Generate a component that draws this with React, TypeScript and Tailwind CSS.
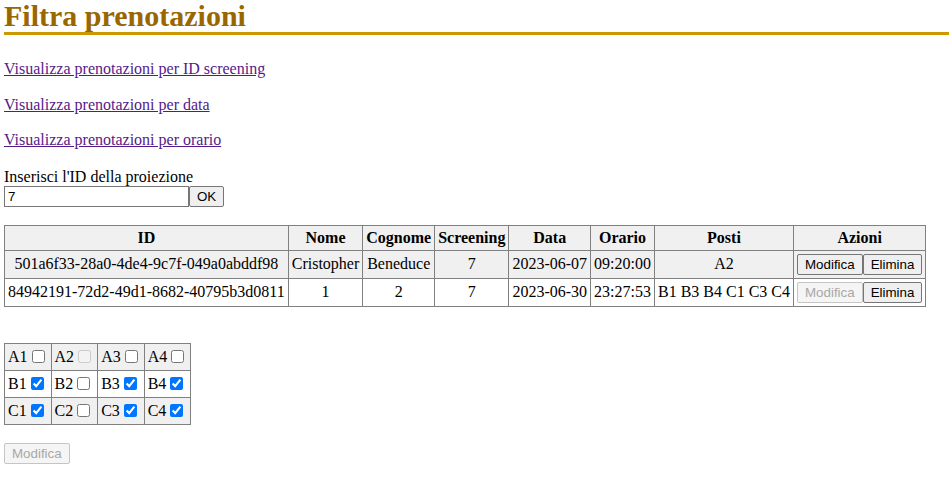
import { useState } from "react";

type Booking = {
  id: string;
  nome: string;
  cognome: string;
  screening: string;
  data: string;
  orario: string;
  posti: string;
  canEdit: boolean;
};

const bookings: Booking[] = [
  {
    id: "501a6f33-28a0-4de4-9c7f-049a0abddf98",
    nome: "Cristopher",
    cognome: "Beneduce",
    screening: "7",
    data: "2023-06-07",
    orario: "09:20:00",
    posti: "A2",
    canEdit: true,
  },
  {
    id: "84942191-72d2-49d1-8682-40795b3d0811",
    nome: "1",
    cognome: "2",
    screening: "7",
    data: "2023-06-30",
    orario: "23:27:53",
    posti: "B1 B3 B4 C1 C3 C4",
    canEdit: false,
  },
];

const seatRows = [
  [
    { name: "A1", checked: false, disabled: false },
    { name: "A2", checked: false, disabled: true },
    { name: "A3", checked: false, disabled: false },
    { name: "A4", checked: false, disabled: false },
  ],
  [
    { name: "B1", checked: true, disabled: false },
    { name: "B2", checked: false, disabled: false },
    { name: "B3", checked: true, disabled: false },
    { name: "B4", checked: true, disabled: false },
  ],
  [
    { name: "C1", checked: true, disabled: false },
    { name: "C2", checked: false, disabled: false },
    { name: "C3", checked: true, disabled: false },
    { name: "C4", checked: true, disabled: false },
  ],
];

const btn =
  "font-['Liberation_Sans',Arial,sans-serif] text-[13.33px] leading-[15px] px-[7px] py-[2px] border rounded-[2px]";
const btnOn = "border-[#767676] bg-[#efefef] text-black";
const btnOff = "border-[#c5c5c5] bg-[#f5f5f5] text-[#a8a8a8]";

const cell = "border border-[#808080] px-[3px] py-[3px] text-center leading-[20px]";

export default function App() {
  const [screeningId, setScreeningId] = useState("7");

  return (
    <div className="min-h-screen bg-white text-black font-['Liberation_Serif','Times_New_Roman',serif] text-[16px] pl-[4px]">
      {/* TITLE */}
      <h1 className="text-[30px] leading-[32px] font-bold text-[#996600] border-b-[3px] border-[#cc9900]">
        Filtra prenotazioni
      </h1>

      {/* FILTER LINKS */}
      <div className="mt-[25px] flex flex-col gap-[17px] leading-[18.5px]">
        <a href="#" className="underline text-[#551a8b] self-start">
          Visualizza prenotazioni per ID screening
        </a>
        <a href="#" className="underline text-[#551a8b] self-start">
          Visualizza prenotazioni per data
        </a>
        <a href="#" className="underline text-[#551a8b] self-start">
          Visualizza prenotazioni per orario
        </a>
      </div>

      {/* ID FORM */}
      <div className="mt-[18px] leading-[18px]">Inserisci l'ID della proiezione</div>
      <div className="flex items-center">
        <input
          value={screeningId}
          onChange={(e) => setScreeningId(e.target.value)}
          className="w-[185px] h-[21px] border border-[#767676] px-[3px] font-['Liberation_Sans',Arial,sans-serif] text-[13.33px] outline-none"
        />
        <button className={`${btn} ${btnOn}`}>OK</button>
      </div>

      {/* BOOKINGS */}
      <table className="mt-[18px] border-collapse border border-[#808080]">
        <thead>
          <tr className="bg-[#f0f0f0]">
            {["ID", "Nome", "Cognome", "Screening", "Data", "Orario", "Posti", "Azioni"].map((h) => (
              <th key={h} className="border border-[#808080] px-[3px] py-[3px] leading-[18px] font-bold">
                {h}
              </th>
            ))}
          </tr>
        </thead>
        <tbody>
          {bookings.map((b, i) => (
            <tr key={b.id} className={i % 2 === 0 ? "bg-[#f0f0f0]" : "bg-white"}>
              <td className={cell}>{b.id}</td>
              <td className={cell}>{b.nome}</td>
              <td className={cell}>{b.cognome}</td>
              <td className={cell}>{b.screening}</td>
              <td className={cell}>{b.data}</td>
              <td className={cell}>{b.orario}</td>
              <td className={cell}>{b.posti}</td>
              <td className={cell}>
                <div className="flex justify-center">
                  <button disabled={!b.canEdit} className={`${btn} ${b.canEdit ? btnOn : btnOff}`}>
                    Modifica
                  </button>
                  <button className={`${btn} ${btnOn}`}>Elimina</button>
                </div>
              </td>
            </tr>
          ))}
        </tbody>
      </table>

      {/* SEATS */}
      <table className="mt-[36px] border-collapse border border-[#808080]">
        <tbody>
          {seatRows.map((row, r) => (
            <tr key={r} className={r % 2 === 0 ? "bg-[#f0f0f0]" : "bg-white"}>
              {row.map((s) => (
                <td key={s.name} className="border border-[#808080] px-[3px] py-[3px] leading-[20px]">
                  <span className="inline-flex items-center">
                    {s.name}
                    <input
                      type="checkbox"
                      defaultChecked={s.checked}
                      disabled={s.disabled}
                      className="ml-[4px] mr-[3px] w-[13px] h-[13px] accent-[#0075ff]"
                    />
                  </span>
                </td>
              ))}
            </tr>
          ))}
        </tbody>
      </table>

      <div className="mt-[16px]">
        <button disabled className={`${btn} ${btnOff}`}>
          Modifica
        </button>
      </div>
    </div>
  );
}
